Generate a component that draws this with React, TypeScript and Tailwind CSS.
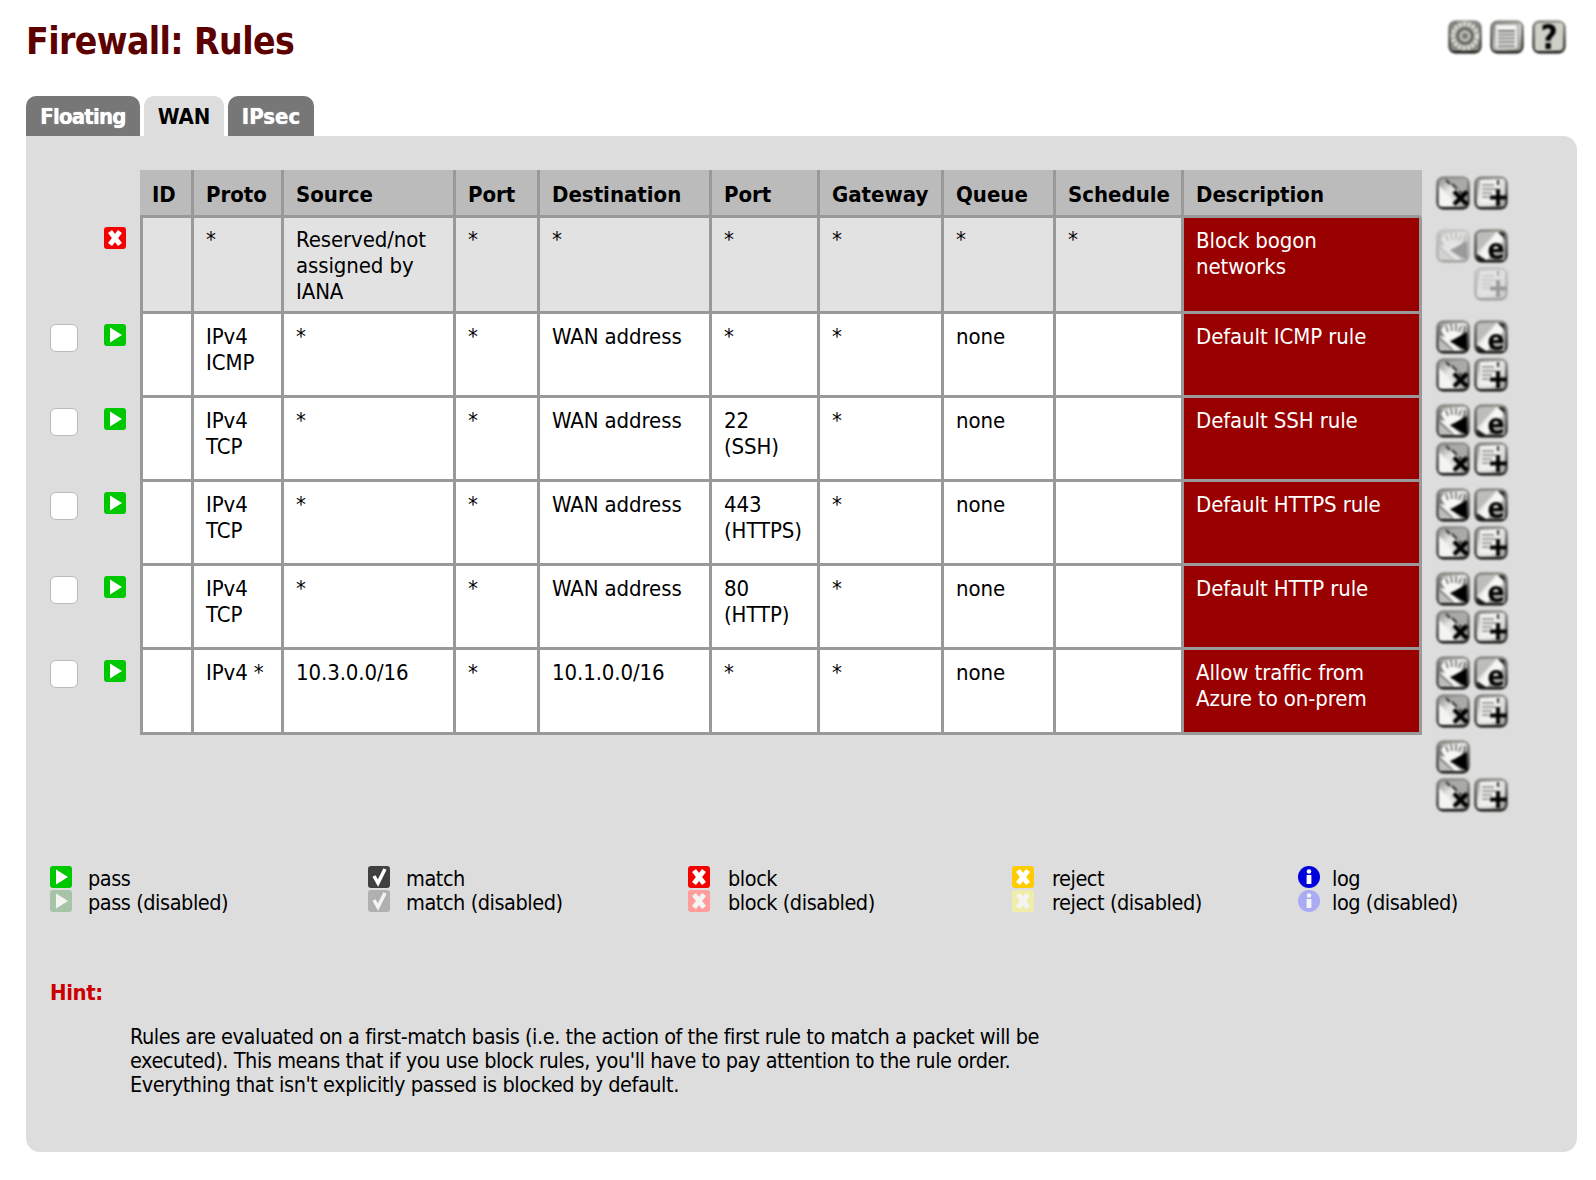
import React from "react";

type Kind = "x" | "plus" | "e" | "hand" | "gear" | "list" | "help";

function Defs() {
  return (
    <svg width="0" height="0" className="block h-0 w-0">
      <defs>
        <linearGradient id="bevel" x1="0" y1="0" x2="1" y2="1">
          <stop offset="0" stopColor="#8e8e8c" />
          <stop offset="0.4" stopColor="#e6e6e4" />
          <stop offset="0.7" stopColor="#d6d6d4" />
          <stop offset="1" stopColor="#8c8c82" />
        </linearGradient>
        <linearGradient id="edge" x1="0" y1="0" x2="0" y2="1">
          <stop offset="0" stopColor="#7c7c76" />
          <stop offset="0.5" stopColor="#33332f" />
          <stop offset="1" stopColor="#0c0c0a" />
        </linearGradient>
      </defs>
    </svg>
  );
}

function Btn({ kind, off }: { kind: Kind; off?: boolean }) {
  return (
    <svg width="34" height="34" viewBox="0 0 34 34" className={off ? "block overflow-visible opacity-30" : "block overflow-visible"}>
      <g className="blur-[0.8px]">
        <rect x="0.5" y="0.5" width="33" height="33" rx="7" fill="url(#edge)" />
        <rect x="2.5" y="2.5" width="29" height="28.5" rx="4" fill="url(#bevel)" />
        {kind === "x" && (
          <>
            <path d="M9 3 L31 23 V6 Q31 3 28 3Z" fill="#a9a9a6" />
            <path d="M10 4 L14 8 M16 8 L21 13 M23 15 L30 21" stroke="#2e2e2c" strokeWidth="2" />
            <path d="M3 10 L3 30 L23 30 Z" fill="#f4f4f2" />
            <path d="M18 15.5 L31 28.5 M31 15.5 L18 28.5" stroke="#000" strokeWidth="4.4" />
          </>
        )}
        {kind === "plus" && (
          <>
            <rect x="6" y="4" width="19" height="24" fill="#f0f0ee" />
            <path d="M8 9 H20 M8 13 H22 M8 17 H18 M8 21 H15" stroke="#9e9e9b" strokeWidth="2" />
            <path d="M24 4 V9" stroke="#333" strokeWidth="2" />
            <path d="M24 13 V30 M16 21.5 H33" stroke="#000" strokeWidth="3.8" />
          </>
        )}
        {kind === "e" && (
          <>
            <path d="M3 24 L22 3 H7 Q3 3 3 7Z" fill="#bdbdba" />
            <path d="M31 12 L31 6 Q31 3 28 3 H24Z" fill="#2c2c28" />
            <path d="M4 28 L23 3 L30 9 L13 31 Z" fill="#f6f6f4" />
            <path d="M3 25 L12 31 H5 Q3 31 3 29Z" fill="#1e1e1a" />
            <path d="M13 31 L31 11 V31Z" fill="#a8a8a4" />
            <text x="22" y="29.5" textAnchor="middle" fontSize="28" fontWeight="700" fontFamily="'DejaVu Sans', sans-serif" fill="#000">e</text>
          </>
        )}
        {kind === "hand" && (
          <>
            <path d="M3 6 H30 L31 30 H14 L3 20Z" fill="#7f7f7b" />
            <path d="M3 19 L3 29 Q3 31 6 31 H17 Z" fill="#bdbdb9" />
            <path d="M3 16 L19 31 H26 L10 17Z" fill="#f6f6f4" />
            <path d="M5 10 Q7 5 12 5 Q22 3 28 7 L25 17 L13 21 Q8 17 5 10 Z" fill="#f6f6f4" />
            <path d="M10 6 L12 12 M15 4 L16 11 M20 4 L20 11 M25 6 L23 12" stroke="#666660" strokeWidth="1.6" />
            <path d="M14 21.5 L31 12 V31 Z" fill="#000" />
          </>
        )}
        {kind === "gear" && (
          <>
            <rect x="2.5" y="2.5" width="29" height="28.5" rx="4" fill="#85857d" />
            <circle cx="17" cy="16" r="12" fill="none" stroke="#d6d6d0" strokeWidth="5" strokeDasharray="3.5 1" />
            <circle cx="17" cy="16" r="7" fill="#c0c0ba" stroke="#5c5c58" strokeWidth="2" />
            <circle cx="17" cy="16" r="3" fill="#7a7a76" />
          </>
        )}
        {kind === "list" && (
          <>
            <rect x="5" y="4" width="23" height="25" fill="#f4f4f2" stroke="#6e6e68" strokeWidth="1" />
            <path d="M8 11 H25 M8 14.7 H25 M8 18.4 H25 M8 22.1 H25 M8 25.8 H25" stroke="#707070" strokeWidth="1.8" />
          </>
        )}
        {kind === "help" && (
          <>
            <rect x="3" y="3" width="28" height="27" rx="4" fill="#cfcfc8" />
            <text x="17" y="29" textAnchor="middle" fontSize="33" fontWeight="700" fontFamily="'DejaVu Sans', sans-serif" fill="#000">?</text>
          </>
        )}
      </g>
    </svg>
  );
}

function Empty() {
  return <div className="h-[34px] w-[34px]" />;
}

function Actions({ top, items }: { top: string; items: { k: Kind | null; off?: boolean }[] }) {
  return (
    <div className={`grid w-[72px] grid-cols-[34px_34px] gap-x-1 gap-y-1 ${top}`}>
      {items.map((it, i) => (it.k ? <Btn key={i} kind={it.k} off={it.off} /> : <Empty key={i} />))}
    </div>
  );
}

type StatusKind = "pass" | "match" | "block" | "reject" | "log";

function Status({ kind, off }: { kind: StatusKind; off?: boolean }) {
  const fill: Record<StatusKind, [string, string]> = {
    pass: ["#00c800", "#a8c4a8"],
    match: ["#404040", "#b0b0b0"],
    block: ["#f50000", "#ff9c9c"],
    reject: ["#ffcc00", "#eeeeaa"],
    log: ["#0000dd", "#aaaaf5"],
  };
  const c = fill[kind][off ? 1 : 0];
  const mark = off ? "#f4f4f4" : "#ffffff";
  return (
    <svg width="22" height="22" viewBox="0 0 22 22" className="block">
      {kind === "log" ? (
        <>
          <circle cx="11" cy="11" r="11" fill={c} />
          <circle cx="11" cy="5.5" r="2.3" fill={mark} />
          <rect x="8.6" y="9" width="4.8" height="9" fill={mark} />
        </>
      ) : (
        <>
          <rect width="22" height="22" rx="3" fill={c} />
          <g className="blur-[0.5px]">
            {kind === "pass" && <path d="M6 3.5 L18 11 L6 18.5Z" fill={mark} />}
            {kind === "match" && <path d="M6 10 L10 17 L17 3" fill="none" stroke={mark} strokeWidth="3.5" />}
            {(kind === "block" || kind === "reject") && (
              <path d="M6 4.5 L16 17.5 M16 4.5 L6 17.5" stroke={mark} strokeWidth="5" />
            )}
          </g>
        </>
      )}
    </svg>
  );
}

const font = "font-['DejaVu_Sans_Condensed','DejaVu_Sans',sans-serif] [font-stretch:condensed]";

const headers = [
  { id: "id", t: "ID" },
  { id: "proto", t: "Proto" },
  { id: "source", t: "Source" },
  { id: "sport", t: "Port" },
  { id: "dest", t: "Destination" },
  { id: "dport", t: "Port" },
  { id: "gw", t: "Gateway" },
  { id: "queue", t: "Queue" },
  { id: "sched", t: "Schedule" },
];

const rows = [
  { h: "h-[84px]", proto: ["IPv4", "ICMP"], src: "*", dest: "WAN address", port: ["*"], desc: ["Default ICMP rule"] },
  { h: "h-[84px]", proto: ["IPv4", "TCP"], src: "*", dest: "WAN address", port: ["22", "(SSH)"], desc: ["Default SSH rule"] },
  { h: "h-[84px]", proto: ["IPv4", "TCP"], src: "*", dest: "WAN address", port: ["443", "(HTTPS)"], desc: ["Default HTTPS rule"] },
  { h: "h-[84px]", proto: ["IPv4", "TCP"], src: "*", dest: "WAN address", port: ["80", "(HTTP)"], desc: ["Default HTTP rule"] },
  { h: "h-[85px]", proto: ["IPv4 *"], src: "10.3.0.0/16", dest: "10.1.0.0/16", port: ["*"], desc: ["Allow traffic from", "Azure to on-prem"] },
];

const cell = "border-r-[3px] border-b-[3px] border-[#999] px-[12px] pt-[10px] align-top tracking-[-0.1px]";
const cell1 = "border-r-[3px] border-b-[3px] border-[#999] px-[12px] pt-[9px] align-top tracking-[-0.1px] bg-[#e2e2e2]";

function Lines({ l }: { l: string[] }) {
  return (
    <>
      {l.map((t) => (
        <div key={t}>{t}</div>
      ))}
    </>
  );
}

const legend: { k: StatusKind; cls: string; pl: string }[] = [
  { k: "pass", cls: "w-[318px]", pl: "pl-[16px]" },
  { k: "match", cls: "w-[320px]", pl: "pl-[16px]" },
  { k: "block", cls: "w-[324px]", pl: "pl-[18px]" },
  { k: "reject", cls: "w-[286px]", pl: "pl-[18px]" },
  { k: "log", cls: "", pl: "pl-[12px]" },
];

export default function App() {
  return (
    <div className={`${font} min-h-[1180px] bg-white text-[22px] leading-[26px] text-black`}>
      <Defs />
      <div className="flex items-start justify-between pl-[26px] pr-[30px] pt-[20px]">
        <h1 className="mt-[1px] text-[37px] font-bold leading-[42px] tracking-[-0.6px] text-[#5c0000]">Firewall: Rules</h1>
        <div className="flex gap-2">
          <Btn kind="gear" />
          <Btn kind="list" />
          <Btn kind="help" />
        </div>
      </div>

      <div className="ml-[26px] mt-[33px] flex gap-1 font-bold leading-[42px]">
        <div className="h-[40px] w-[114px] rounded-t-[10px] bg-[#777] text-center tracking-[-0.8px] text-white [text-shadow:0_0_1px_#fff]">Floating</div>
        <div className="h-[40px] w-[80px] rounded-t-[10px] bg-[#ddd] text-center text-black">WAN</div>
        <div className="h-[40px] w-[86px] rounded-t-[10px] bg-[#777] text-center text-white [text-shadow:0_0_1px_#fff]">IPsec</div>
      </div>

      <div className="ml-[26px] h-[1016px] w-[1551px] rounded-b-[14px] rounded-tr-[14px] bg-[#ddd] pl-[24px] pt-[34px]">
        <table className="table-fixed border-separate border-spacing-0">
          <colgroup>
            <col className="w-[54px]" />
            <col className="w-[36px]" />
            <col className="w-[54px]" />
            <col className="w-[90px]" />
            <col className="w-[172px]" />
            <col className="w-[84px]" />
            <col className="w-[172px]" />
            <col className="w-[108px]" />
            <col className="w-[124px]" />
            <col className="w-[112px]" />
            <col className="w-[128px]" />
            <col className="w-[238px]" />
            <col className="w-[90px]" />
          </colgroup>
          <tbody>
            <tr className="h-[48px]">
              <td />
              <td />
              {headers.map((h) => (
                <th key={h.id} className="border-r-[3px] border-b-[3px] border-[#999] bg-[#bbb] pl-[12px] pt-[4px] text-left align-middle font-bold">
                  {h.t}
                </th>
              ))}
              <th className="border-b-[3px] border-r-[3px] border-[#bbb] border-b-[#999] bg-[#bbb] pl-[12px] pt-[4px] text-left align-middle font-bold">Description</th>
              <td className="pl-[14px] align-top">
                <Actions top="pt-[6px]" items={[{ k: "x" }, { k: "plus" }]} />
              </td>
            </tr>

            <tr className="h-[96px]">
              <td />
              <td className="pt-[9px] align-top">
                <Status kind="block" />
              </td>
              <td className={`${cell1} border-l-[3px]`} />
              <td className={cell1}>*</td>
              <td className={cell1}>
                <div>Reserved/not</div>
                <div>assigned by</div>
                <div>IANA</div>
              </td>
              <td className={cell1}>*</td>
              <td className={cell1}>*</td>
              <td className={cell1}>*</td>
              <td className={cell1}>*</td>
              <td className={cell1}>*</td>
              <td className={cell1}>*</td>
              <td className={`${cell} bg-[#990000] text-white`}>
                <div>Block bogon</div>
                <div>networks</div>
              </td>
              <td className="pl-[14px] align-top">
                <Actions top="pt-[11px]" items={[{ k: "hand", off: true }, { k: "e" }, { k: null }, { k: "plus", off: true }]} />
              </td>
            </tr>

            {rows.map((r, i) => (
              <tr key={i} className={r.h}>
                <td className="pt-[10px] align-top">
                  <div className="h-[28px] w-[28px] rounded-[6px] border border-[#bbb] bg-white" />
                </td>
                <td className="pt-[10px] align-top">
                  <Status kind="pass" />
                </td>
                <td className={`${cell} border-l-[3px] bg-white`} />
                <td className={`${cell} bg-white`}>
                  <Lines l={r.proto} />
                </td>
                <td className={`${cell} bg-white`}>{r.src}</td>
                <td className={`${cell} bg-white`}>*</td>
                <td className={`${cell} bg-white`}>{r.dest}</td>
                <td className={`${cell} bg-white`}>
                  <Lines l={r.port} />
                </td>
                <td className={`${cell} bg-white`}>*</td>
                <td className={`${cell} bg-white`}>none</td>
                <td className={`${cell} bg-white`} />
                <td className={`${cell} bg-[#990000] text-white`}>
                  <Lines l={r.desc} />
                </td>
                <td className="pl-[14px] align-top">
                  <Actions top="pt-[6px]" items={[{ k: "hand" }, { k: "e" }, { k: "x" }, { k: "plus" }]} />
                </td>
              </tr>
            ))}

            <tr>
              <td colSpan={12} />
              <td className="pl-[14px] align-top">
                <Actions top="pt-[5px]" items={[{ k: "hand" }, { k: null }, { k: "x" }, { k: "plus" }]} />
              </td>
            </tr>
          </tbody>
        </table>

        <div className="mt-[54px] flex text-[21.5px] tracking-[-0.45px]">
          {legend.map((l) => (
            <div key={l.k} className={`flex ${l.cls}`}>
              <div className="flex flex-col gap-[2px]">
                <Status kind={l.k} />
                <Status kind={l.k} off />
              </div>
              <div className={`${l.pl} pt-[1px] leading-[24px]`}>
                <div>{l.k}</div>
                <div>{l.k} (disabled)</div>
              </div>
            </div>
          ))}
        </div>

        <div className="mt-[66px] font-bold leading-[24px] tracking-[-0.4px] text-[#cc0000]">Hint:</div>
        <p className="ml-[80px] mt-[20px] w-[960px] text-[21.5px] leading-[24px] tracking-[-0.45px]">
          Rules are evaluated on a first-match basis (i.e. the action of the first rule to match a packet will be
          <br />
          executed). This means that if you use block rules, you'll have to pay attention to the rule order.
          <br />
          Everything that isn't explicitly passed is blocked by default.
        </p>
      </div>
    </div>
  );
}
